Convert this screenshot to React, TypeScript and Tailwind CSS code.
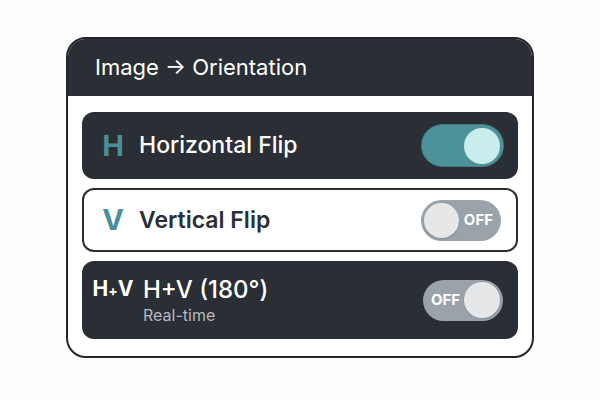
import type { ReactNode } from "react";

function Toggle({ on, label }: { on: boolean; label?: "left" | "right" }) {
  if (on) {
    return (
      <div className="flex h-[41px] w-[81px] items-center justify-end rounded-full bg-[#4e9299] pr-[3px] ring-1 ring-[#3f7c82]">
        <div className="size-[36px] rounded-full bg-[#c9ecec]" />
      </div>
    );
  }
  return (
    <div className="flex h-[41px] w-[80px] items-center justify-between rounded-full bg-[#9aa3aa] px-[3px]">
      {label === "right" ? (
        <>
          <div className="size-[35px] rounded-full bg-[#e6e7e8] shadow-sm" />
          <span className="pr-[5px] text-[15px] font-bold text-white">OFF</span>
        </>
      ) : (
        <>
          <span className="pl-[5px] text-[15px] font-bold text-white">OFF</span>
          <div className="size-[36px] rounded-full bg-[#e6e7e8] shadow-sm" />
        </>
      )}
    </div>
  );
}

function Row({
  icon,
  children,
  toggle,
  light,
  className,
}: {
  icon: ReactNode;
  children: ReactNode;
  toggle: ReactNode;
  light?: boolean;
  className: string;
}) {
  return (
    <div
      className={`flex items-center rounded-[12px] pr-[15px] ${
        light
          ? "border-2 border-[#2a2e35] bg-white pl-[7px] text-[#2a2e35]"
          : "bg-[#2a2e35] pl-[9px] text-white"
      } ${className}`}
    >
      <div className="flex w-[44px] justify-center">{icon}</div>
      <div className="ml-[4px] flex-1">{children}</div>
      {toggle}
    </div>
  );
}

export default function App() {
  return (
    <div
      className="flex h-[400px] w-[600px] justify-center bg-[#fdfdfd] pt-[37px]"
      style={{ fontFamily: "Inter, 'Noto Sans', sans-serif" }}
    >
      <div className="flex h-[321px] w-[468px] flex-col overflow-hidden rounded-[20px] border-2 border-[#23272c] bg-white">
        <header className="flex h-[57px] items-center bg-[#2a2e35] pl-[27px] text-[22px] text-white">
          Image → Orientation
        </header>
        <div className="flex flex-col gap-[9px] px-[14px] pt-[16px]">
          <Row
            className="h-[67px]"
            icon={<span className="text-[29px] font-bold text-[#4a9098]">H</span>}
            toggle={<Toggle on />}
          >
            <span className="text-[23px] font-medium">Horizontal Flip</span>
          </Row>
          <Row
            light
            className="h-[64px]"
            icon={<span className="text-[29px] font-bold text-[#4a9098]">V</span>}
            toggle={<Toggle on={false} label="right" />}
          >
            <span className="text-[23px] font-semibold">Vertical Flip</span>
          </Row>
          <Row
            className="h-[78px]"
            icon={
              <span className="-mt-[22px] text-[21px] font-bold text-white">
                H<span className="text-[14px]">+</span>V
              </span>
            }
            toggle={<Toggle on={false} label="left" />}
          >
            <div className="ml-[4px] flex flex-col leading-tight">
              <span className="text-[24px] font-medium">H+V (180°)</span>
              <span className="text-[16px] text-[#b4b9be]">Real-time</span>
            </div>
          </Row>
        </div>
      </div>
    </div>
  );
}
